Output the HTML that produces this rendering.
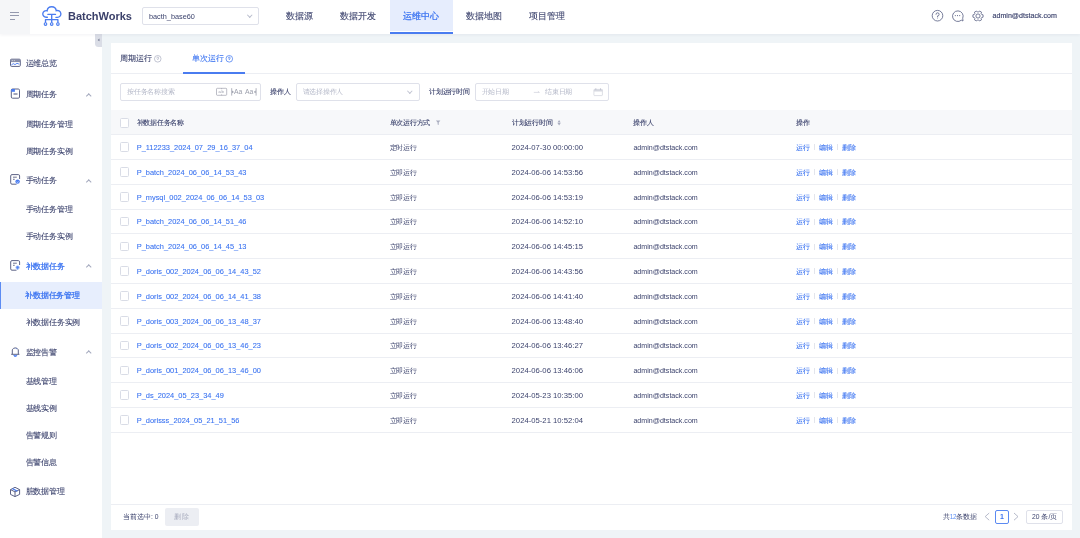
<!DOCTYPE html>
<html><head><meta charset="utf-8"><style>
*{box-sizing:border-box;margin:0;padding:0}
.s,.nav,.mi{-webkit-text-stroke:0.1px currentColor}
html,body{width:1080px;height:538px;overflow:hidden;background:#eff4f7;font-family:"Liberation Sans",sans-serif;color:#3d446e}
#root{position:absolute;left:0;top:0;width:1080px;height:538px;will-change:transform;overflow:hidden}
.a{position:absolute;white-space:nowrap}
#hdr{position:absolute;left:0;top:0;width:1080px;height:34px;background:#fff;box-shadow:0 1px 3px rgba(30,40,80,.06);z-index:3}
#ham{position:absolute;left:0;top:0;width:30px;height:34px;background:#f5f6f8}
#ham i{position:absolute;left:9.7px;height:1px;background:#9499ae;width:8.9px}
.nav{position:absolute;top:0;height:31px;line-height:32.4px;font-size:9px;color:#3d446e;text-align:center;font-weight:500}
.nav.on{background:#e6edfd;color:#3a73f1}
.nav.on:after{content:"";position:absolute;left:0;right:0;top:32px;height:2px;background:#4a7cf0}
#side{position:absolute;left:0;top:34px;width:102px;height:504px;background:#fff;z-index:2}
.mi{position:absolute;left:0;width:102px;height:27px;line-height:27px;font-size:7.75px;letter-spacing:-0.2px;color:#3d446e;z-index:2;font-weight:500}
.mi .t{position:absolute;left:25.5px;top:0}
.mi.on{background:#e7eefd;color:#3a73f1;border-left:1.2px solid #5d8cf3}
.mi.on .t{left:24.3px}
.mi.blue{color:#3a73f1}
.mi.on,.mi.blue,.nav.on{-webkit-text-stroke:0.25px currentColor}
.chev{position:absolute;left:87.3px;top:12.6px;width:3.5px;height:3.5px;border-left:1px solid #a3a8bd;border-top:1px solid #a3a8bd;transform:rotate(45deg)}
#card{position:absolute;left:111px;top:43px;width:960.8px;height:486.5px;background:#fff}
.f7{font-size:6.75px;letter-spacing:-0.25px}
.ph{color:#b4b8c8}
.bd{font-weight:400;-webkit-text-stroke:0.12px currentColor}
.box{position:absolute;border:1px solid #dfe1ea;border-radius:2px;background:#fff}
.cb{position:absolute;left:120.1px;width:8.8px;height:9.5px;border:1px solid #d9dce6;border-radius:1.5px;background:#fff}
.row{position:absolute;left:111px;width:961px;height:24.8px;border-bottom:1px solid #eceef3}
.lk{color:#3a73f1;-webkit-text-stroke:0.08px currentColor}
.sep{position:absolute;width:1px;height:6px;background:#e3e5ec}
</style></head><body><div id="root">
<div id="hdr">
<div id="ham"><i style="top:11.8px"></i><i style="top:15.1px"></i><i style="top:18.8px;width:5.5px"></i></div>
<svg class="a" style="left:41px;top:5.3px" width="22" height="22" viewBox="41 5 22 22" fill="none" stroke="#4a7cf0" stroke-width="1.35" stroke-linecap="round">
<path d="M47.4 17.20 H46.10 A3.3 3.3 0 1 1 47.13 10.77 A4.6 4.6 0 0 1 56.26 10.73 A3.4 3.4 0 1 1 57.50 17.30 H55.9"/>
<path d="M47.9 14.4 H55.5 M51.7 14.4 V19.6 M45.5 19.6 H57.9 M45.5 19.6 V22.6 M51.7 19.6 V22.6 M57.9 19.6 V22.6"/>
<circle cx="45.5" cy="24.1" r="1.3" fill="#fff" stroke-width="1.1"/><circle cx="51.7" cy="24.1" r="1.3" fill="#fff" stroke-width="1.1"/><circle cx="57.9" cy="24.1" r="1.3" fill="#fff" stroke-width="1.1"/>
</svg>
<div class="a" style="left:68px;top:8.5px;font-size:11px;font-weight:700;color:#3b406a;line-height:15px">BatchWorks</div>
<div class="box" style="left:142px;top:7px;width:117px;height:18px"></div>
<div class="a" style="left:149px;top:8px;line-height:18px;font-size:7.3px;color:#3d446e">bacth_base60</div>
<div class="a" style="left:247.5px;top:12.8px;width:3.5px;height:3.5px;border-right:1px solid #b8bccc;border-bottom:1px solid #b8bccc;transform:rotate(45deg)"></div>
<div class="nav" style="left:272.5px;width:54px">数据源</div>
<div class="nav" style="left:326.5px;width:63px">数据开发</div>
<div class="nav on" style="left:389.5px;width:63px">运维中心</div>
<div class="nav" style="left:452.5px;width:63px">数据地图</div>
<div class="nav" style="left:515.5px;width:63px">项目管理</div>
<svg class="a" style="left:928px;top:8px" width="60" height="16" viewBox="928 8 60 16" fill="none" stroke="#5f6688" stroke-width="0.85">
<circle cx="937.5" cy="15.7" r="5.3"/>
<path d="M936 14.3 A1.55 1.55 0 1 1 937.6 15.9 V17" stroke-linecap="round"/><circle cx="937.6" cy="18.3" r="0.4" fill="#5f6688" stroke="none"/>
<path d="M963 21 L961.3 20.2 A5.3 5.3 0 1 1 962.7 18.3 Z" stroke-linejoin="round"/>
<circle cx="955.3" cy="15.6" r="0.55" fill="#5f6688" stroke="none"/><circle cx="957.5" cy="15.6" r="0.55" fill="#5f6688" stroke="none"/><circle cx="959.7" cy="15.6" r="0.55" fill="#5f6688" stroke="none"/>
<path d="M981.71 14.50 L983.07 14.83 L983.07 17.17 L981.71 17.50 L981.15 18.46 L981.55 19.80 L979.52 20.97 L978.56 19.96 L977.44 19.96 L976.48 20.97 L974.45 19.80 L974.85 18.46 L974.29 17.50 L972.93 17.17 L972.93 14.83 L974.29 14.50 L974.85 13.54 L974.45 12.20 L976.48 11.03 L977.44 12.04 L978.56 12.04 L979.52 11.03 L981.55 12.20 L981.15 13.54 Z" stroke-linejoin="round"/>
<circle cx="978" cy="16" r="2.1"/>
</svg>
<div class="a" style="left:992.5px;top:9.7px;line-height:12px;font-size:7.1px;color:#3d446e;-webkit-text-stroke:0.15px #3d446e">admin@dtstack.com</div>
</div>
<div id="side"></div>
<div class="a" style="left:95px;top:34px;width:7px;height:13.3px;background:#dadde6;border-radius:0 0 0 3.5px;z-index:2"></div>
<div class="a" style="left:98.4px;top:39.2px;width:2.4px;height:2.4px;border-left:0.7px solid #8d91a6;border-bottom:0.7px solid #8d91a6;transform:rotate(45deg);z-index:2"></div>
<div class="mi g" style="top:49.50px"><span class="t">运维总览</span></div>
<div class="mi g c" style="top:81.20px"><span class="t">周期任务</span><i class="chev"></i></div>
<div class="mi " style="top:110.80px"><span class="t">周期任务管理</span></div>
<div class="mi " style="top:137.70px"><span class="t">周期任务实例</span></div>
<div class="mi g c" style="top:167.00px"><span class="t">手动任务</span><i class="chev"></i></div>
<div class="mi " style="top:196.10px"><span class="t">手动任务管理</span></div>
<div class="mi " style="top:223.40px"><span class="t">手动任务实例</span></div>
<div class="mi g c blue" style="top:252.80px"><span class="t">补数据任务</span><i class="chev"></i></div>
<div class="mi on" style="top:282.00px"><span class="t">补数据任务管理</span></div>
<div class="mi " style="top:309.10px"><span class="t">补数据任务实例</span></div>
<div class="mi g c" style="top:338.50px"><span class="t">监控告警</span><i class="chev"></i></div>
<div class="mi " style="top:367.90px"><span class="t">基线管理</span></div>
<div class="mi " style="top:395.20px"><span class="t">基线实例</span></div>
<div class="mi " style="top:421.70px"><span class="t">告警规则</span></div>
<div class="mi " style="top:448.50px"><span class="t">告警信息</span></div>
<div class="mi g" style="top:478.00px"><span class="t">脏数据管理</span></div>
<svg class="a" style="left:0;top:34px;z-index:3" width="30" height="504" viewBox="0 34 30 504" fill="none" stroke="#5d6386" stroke-width="1">
<rect x="10.5" y="59.2" width="9.8" height="7.2" rx="1"/>
<rect x="10.5" y="59.2" width="9.8" height="2.9" fill="#8a8fa8" stroke="none"/><path d="M11.8 60.6 H12.8 M13.8 60.6 H14.8" stroke="#fff" stroke-width="0.6"/>
<path d="M11.2 65.2 L13.2 63.6 L15 64.6 L17 63.3 L19.3 64.2" stroke="#4a7cf0" stroke-width="0.9"/>
<rect x="11.3" y="89" width="8.2" height="9.2" rx="1.2"/>
<rect x="11.3" y="89" width="3.6" height="2.8" fill="#4a7cf0" stroke="none"/>
<path d="M13.5 94 H17.5" stroke-width="1.4" stroke="#7a7f9c"/>
<path d="M16.5 184.2 H12 A1.3 1.3 0 0 1 10.7 182.9 V175.9 A1.3 1.3 0 0 1 12 174.6 H18.3 A1.3 1.3 0 0 1 19.6 175.9 V179"/>
<path d="M13 177.2 H16.8 M13 179.3 H14.7" stroke-width="0.9"/>
<circle cx="17.6" cy="181.6" r="2.2" fill="#4a7cf0" stroke="none"/>
<path d="M16.6 181.8 L17.6 182.4 L18.6 181.6" stroke="#fff" stroke-width="0.6"/>
<path d="M16.5 270.2 H12 A1.3 1.3 0 0 1 10.7 268.9 V261.9 A1.3 1.3 0 0 1 12 260.6 H18.3 A1.3 1.3 0 0 1 19.6 261.9 V265"/>
<path d="M13 263.2 H16.8 M13 265.3 H14.7" stroke-width="0.9"/>
<circle cx="17.6" cy="267.6" r="2.1" fill="#9fbaf7" stroke="none"/>
<path d="M17.6 266.2 V269.4 M16.2 267.3 H19" stroke="#4a7cf0" stroke-width="0.8"/>
<path d="M11.2 354.3 H19.4 M12.3 354.3 V349.8 A3.3 3.3 0 0 1 18.3 349.8 V354.3"/>
<path d="M13.8 355.2 A1.5 1.2 0 0 0 16.8 355.2" fill="#4a7cf0" stroke="#4a7cf0"/>
<path d="M15.6 348.3 L16.6 348.3 L16.1 349.4 Z" fill="#4a7cf0" stroke="none"/>
<path d="M15 487.3 L19.6 489.6 V494.4 L15 496.6 L10.5 494.4 V489.6 Z M10.5 489.6 L15 491.9 L19.6 489.6 M15 491.9 V496.6" stroke-linejoin="round"/>
<path d="M12.5 488.6 L17.4 491.2" stroke="#4a7cf0" stroke-width="1.2"/>
</svg>
<div id="card"></div>
<div class="a s" style="left:120px;top:52.7px;line-height:12px;font-size:8px;font-weight:500">周期运行</div>
<div class="a s" style="left:192px;top:52.7px;line-height:12px;font-size:8px;font-weight:500;color:#3a73f1">单次运行</div>
<svg class="a" style="left:150px;top:52px" width="90" height="14" viewBox="150 52 90 14" fill="none" stroke-width="0.7">
<circle cx="157.75" cy="58.8" r="3.3" stroke="#a9adc0"/>
<path d="M156.8 58.1 A0.95 0.95 0 1 1 157.75 59 V59.6" stroke="#a9adc0" stroke-linecap="round"/>
<circle cx="229.3" cy="58.8" r="3.3" stroke="#3a73f1"/>
<path d="M228.35 58.1 A0.95 0.95 0 1 1 229.3 59 V59.6" stroke="#3a73f1" stroke-linecap="round"/>
</svg>
<div class="a" style="left:111px;top:73px;width:961px;height:1px;background:#eceef3"></div>
<div class="a" style="left:183px;top:72.3px;width:62px;height:2px;background:#4a7cf0"></div>
<div class="box" style="left:120.4px;top:83px;width:140.6px;height:17.5px"></div>
<div class="a f7 ph" style="left:127px;top:85.5px;line-height:12px">按任务名称搜索</div>
<svg class="a" style="left:214px;top:86px" width="46" height="12" viewBox="214 86 46 12" fill="none" stroke="#8e91a0" stroke-width="0.6">
<rect x="216.5" y="88.3" width="10.2" height="7" rx="0.8"/>
<path d="M221.6 88.3 V89.2 M221.6 94.4 V95.3"/>

<path d="M231.7 88.2 V95.6" stroke-width="0.7"/>
<path d="M232.2 90.6 L233.9 91.9 L232.2 93.2 Z M255.6 90.6 L253.9 91.9 L255.6 93.2 Z" fill="#8e91a0" stroke="none"/>
<path d="M256.1 88.2 V95.6" stroke-width="0.7"/>
<text x="221.6" y="93.4" font-size="4" fill="#8e91a0" stroke="none" font-family="Liberation Sans" text-anchor="middle" letter-spacing="0.8">ab</text>
</svg>
<div class="a" style="left:234px;top:86px;line-height:12px;font-size:6.8px;color:#9a9daa">Aa</div>
<div class="a" style="left:245px;top:86px;line-height:12px;font-size:6.8px;color:#9a9daa">Aa</div>
<div class="a f7 bd" style="left:270.4px;top:85.8px;line-height:12px">操作人</div>
<div class="box" style="left:296px;top:83px;width:124px;height:17.5px"></div>
<div class="a f7 ph" style="left:302.6px;top:85.5px;line-height:12px">请选择操作人</div>
<div class="a" style="left:408.3px;top:89.2px;width:3.6px;height:3.6px;border-right:0.7px solid #c2c5d2;border-bottom:0.7px solid #c2c5d2;transform:rotate(45deg)"></div>
<div class="a f7 bd" style="left:429px;top:85.8px;line-height:12px">计划运行时间</div>
<div class="box" style="left:475px;top:83px;width:133.6px;height:17.5px"></div>
<div class="a f7 ph" style="left:481.7px;top:85.5px;line-height:12px">开始日期</div>
<div class="a f7 ph" style="left:545px;top:85.5px;line-height:12px">结束日期</div>
<svg class="a" style="left:530px;top:86px" width="76" height="12" viewBox="530 86 76 12" fill="none" stroke="#c0c3d0" stroke-width="0.55">
<path d="M533.8 92.4 H539.4 L537.9 91.3"/>
<rect x="593.9" y="89.4" width="8.5" height="6.2" rx="0.6" stroke="#c3c6d2"/>
<rect x="593.9" y="89.4" width="8.5" height="2.1" fill="#d6d8e0" stroke="none"/>
<path d="M595.8 88.2 V90 M600.5 88.2 V90" stroke="#b9bcca" stroke-width="0.7"/>
</svg>
<div class="a" style="left:111px;top:110px;width:961px;height:25px;background:#f7f8fa;border-bottom:1px solid #eceef3"></div>
<div class="cb" style="top:118.2px"></div>
<div class="a f7 bd" style="left:136.5px;top:116.5px;line-height:12px">补数据任务名称</div>
<div class="a f7 bd" style="left:389.6px;top:116.5px;line-height:12px">单次运行方式</div>
<div class="a f7 bd" style="left:511.9px;top:116.5px;line-height:12px">计划运行时间</div>
<div class="a f7 bd" style="left:633.4px;top:116.5px;line-height:12px">操作人</div>
<div class="a f7 bd" style="left:796px;top:116.5px;line-height:12px">操作</div>
<svg class="a" style="left:434px;top:118px" width="130" height="10" viewBox="434 118 130 10" stroke="none" fill="#a9adbf">
<path d="M435.9 120.4 H440.4 L438.7 122.6 V125.1 L437.6 124.5 V122.6 Z"/>
<path d="M557.5 122.4 L559.1 120.1 L560.7 122.4 Z M557.5 123.1 L559.1 125.5 L560.7 123.1 Z"/>
</svg>
<div class="row" style="top:135.20px"></div>
<div class="cb" style="top:142.40px"></div>
<div class="a lk" style="left:136.7px;top:141.90px;line-height:12px;font-size:7.43px">P_112233_2024_07_29_16_37_04</div>
<div class="a f7" style="left:389.6px;top:141.90px;line-height:12px;font-weight:500">定时运行</div>
<div class="a" style="left:511.6px;top:141.90px;line-height:12px;font-size:7.7px">2024-07-30 00:00:00</div>
<div class="a" style="left:633.4px;top:141.90px;line-height:12px;font-size:7.1px">admin@dtstack.com</div>
<div class="a f7 lk" style="left:796px;top:141.90px;line-height:12px">运行</div>
<div class="sep" style="left:814.3px;top:144.40px"></div>
<div class="a f7 lk" style="left:819px;top:141.90px;line-height:12px">编辑</div>
<div class="sep" style="left:837.3px;top:144.40px"></div>
<div class="a f7 lk" style="left:842px;top:141.90px;line-height:12px">删除</div>
<div class="row" style="top:160.00px"></div>
<div class="cb" style="top:167.20px"></div>
<div class="a lk" style="left:136.7px;top:166.70px;line-height:12px;font-size:7.43px">P_batch_2024_06_06_14_53_43</div>
<div class="a f7" style="left:389.6px;top:166.70px;line-height:12px;font-weight:500">立即运行</div>
<div class="a" style="left:511.6px;top:166.70px;line-height:12px;font-size:7.7px">2024-06-06 14:53:56</div>
<div class="a" style="left:633.4px;top:166.70px;line-height:12px;font-size:7.1px">admin@dtstack.com</div>
<div class="a f7 lk" style="left:796px;top:166.70px;line-height:12px">运行</div>
<div class="sep" style="left:814.3px;top:169.20px"></div>
<div class="a f7 lk" style="left:819px;top:166.70px;line-height:12px">编辑</div>
<div class="sep" style="left:837.3px;top:169.20px"></div>
<div class="a f7 lk" style="left:842px;top:166.70px;line-height:12px">删除</div>
<div class="row" style="top:184.80px"></div>
<div class="cb" style="top:192.00px"></div>
<div class="a lk" style="left:136.7px;top:191.50px;line-height:12px;font-size:7.43px">P_mysql_002_2024_06_06_14_53_03</div>
<div class="a f7" style="left:389.6px;top:191.50px;line-height:12px;font-weight:500">立即运行</div>
<div class="a" style="left:511.6px;top:191.50px;line-height:12px;font-size:7.7px">2024-06-06 14:53:19</div>
<div class="a" style="left:633.4px;top:191.50px;line-height:12px;font-size:7.1px">admin@dtstack.com</div>
<div class="a f7 lk" style="left:796px;top:191.50px;line-height:12px">运行</div>
<div class="sep" style="left:814.3px;top:194.00px"></div>
<div class="a f7 lk" style="left:819px;top:191.50px;line-height:12px">编辑</div>
<div class="sep" style="left:837.3px;top:194.00px"></div>
<div class="a f7 lk" style="left:842px;top:191.50px;line-height:12px">删除</div>
<div class="row" style="top:209.60px"></div>
<div class="cb" style="top:216.80px"></div>
<div class="a lk" style="left:136.7px;top:216.30px;line-height:12px;font-size:7.43px">P_batch_2024_06_06_14_51_46</div>
<div class="a f7" style="left:389.6px;top:216.30px;line-height:12px;font-weight:500">立即运行</div>
<div class="a" style="left:511.6px;top:216.30px;line-height:12px;font-size:7.7px">2024-06-06 14:52:10</div>
<div class="a" style="left:633.4px;top:216.30px;line-height:12px;font-size:7.1px">admin@dtstack.com</div>
<div class="a f7 lk" style="left:796px;top:216.30px;line-height:12px">运行</div>
<div class="sep" style="left:814.3px;top:218.80px"></div>
<div class="a f7 lk" style="left:819px;top:216.30px;line-height:12px">编辑</div>
<div class="sep" style="left:837.3px;top:218.80px"></div>
<div class="a f7 lk" style="left:842px;top:216.30px;line-height:12px">删除</div>
<div class="row" style="top:234.40px"></div>
<div class="cb" style="top:241.60px"></div>
<div class="a lk" style="left:136.7px;top:241.10px;line-height:12px;font-size:7.43px">P_batch_2024_06_06_14_45_13</div>
<div class="a f7" style="left:389.6px;top:241.10px;line-height:12px;font-weight:500">立即运行</div>
<div class="a" style="left:511.6px;top:241.10px;line-height:12px;font-size:7.7px">2024-06-06 14:45:15</div>
<div class="a" style="left:633.4px;top:241.10px;line-height:12px;font-size:7.1px">admin@dtstack.com</div>
<div class="a f7 lk" style="left:796px;top:241.10px;line-height:12px">运行</div>
<div class="sep" style="left:814.3px;top:243.60px"></div>
<div class="a f7 lk" style="left:819px;top:241.10px;line-height:12px">编辑</div>
<div class="sep" style="left:837.3px;top:243.60px"></div>
<div class="a f7 lk" style="left:842px;top:241.10px;line-height:12px">删除</div>
<div class="row" style="top:259.20px"></div>
<div class="cb" style="top:266.40px"></div>
<div class="a lk" style="left:136.7px;top:265.90px;line-height:12px;font-size:7.43px">P_doris_002_2024_06_06_14_43_52</div>
<div class="a f7" style="left:389.6px;top:265.90px;line-height:12px;font-weight:500">立即运行</div>
<div class="a" style="left:511.6px;top:265.90px;line-height:12px;font-size:7.7px">2024-06-06 14:43:56</div>
<div class="a" style="left:633.4px;top:265.90px;line-height:12px;font-size:7.1px">admin@dtstack.com</div>
<div class="a f7 lk" style="left:796px;top:265.90px;line-height:12px">运行</div>
<div class="sep" style="left:814.3px;top:268.40px"></div>
<div class="a f7 lk" style="left:819px;top:265.90px;line-height:12px">编辑</div>
<div class="sep" style="left:837.3px;top:268.40px"></div>
<div class="a f7 lk" style="left:842px;top:265.90px;line-height:12px">删除</div>
<div class="row" style="top:284.00px"></div>
<div class="cb" style="top:291.20px"></div>
<div class="a lk" style="left:136.7px;top:290.70px;line-height:12px;font-size:7.43px">P_doris_002_2024_06_06_14_41_38</div>
<div class="a f7" style="left:389.6px;top:290.70px;line-height:12px;font-weight:500">立即运行</div>
<div class="a" style="left:511.6px;top:290.70px;line-height:12px;font-size:7.7px">2024-06-06 14:41:40</div>
<div class="a" style="left:633.4px;top:290.70px;line-height:12px;font-size:7.1px">admin@dtstack.com</div>
<div class="a f7 lk" style="left:796px;top:290.70px;line-height:12px">运行</div>
<div class="sep" style="left:814.3px;top:293.20px"></div>
<div class="a f7 lk" style="left:819px;top:290.70px;line-height:12px">编辑</div>
<div class="sep" style="left:837.3px;top:293.20px"></div>
<div class="a f7 lk" style="left:842px;top:290.70px;line-height:12px">删除</div>
<div class="row" style="top:308.80px"></div>
<div class="cb" style="top:316.00px"></div>
<div class="a lk" style="left:136.7px;top:315.50px;line-height:12px;font-size:7.43px">P_doris_003_2024_06_06_13_48_37</div>
<div class="a f7" style="left:389.6px;top:315.50px;line-height:12px;font-weight:500">立即运行</div>
<div class="a" style="left:511.6px;top:315.50px;line-height:12px;font-size:7.7px">2024-06-06 13:48:40</div>
<div class="a" style="left:633.4px;top:315.50px;line-height:12px;font-size:7.1px">admin@dtstack.com</div>
<div class="a f7 lk" style="left:796px;top:315.50px;line-height:12px">运行</div>
<div class="sep" style="left:814.3px;top:318.00px"></div>
<div class="a f7 lk" style="left:819px;top:315.50px;line-height:12px">编辑</div>
<div class="sep" style="left:837.3px;top:318.00px"></div>
<div class="a f7 lk" style="left:842px;top:315.50px;line-height:12px">删除</div>
<div class="row" style="top:333.60px"></div>
<div class="cb" style="top:340.80px"></div>
<div class="a lk" style="left:136.7px;top:340.30px;line-height:12px;font-size:7.43px">P_doris_002_2024_06_06_13_46_23</div>
<div class="a f7" style="left:389.6px;top:340.30px;line-height:12px;font-weight:500">立即运行</div>
<div class="a" style="left:511.6px;top:340.30px;line-height:12px;font-size:7.7px">2024-06-06 13:46:27</div>
<div class="a" style="left:633.4px;top:340.30px;line-height:12px;font-size:7.1px">admin@dtstack.com</div>
<div class="a f7 lk" style="left:796px;top:340.30px;line-height:12px">运行</div>
<div class="sep" style="left:814.3px;top:342.80px"></div>
<div class="a f7 lk" style="left:819px;top:340.30px;line-height:12px">编辑</div>
<div class="sep" style="left:837.3px;top:342.80px"></div>
<div class="a f7 lk" style="left:842px;top:340.30px;line-height:12px">删除</div>
<div class="row" style="top:358.40px"></div>
<div class="cb" style="top:365.60px"></div>
<div class="a lk" style="left:136.7px;top:365.10px;line-height:12px;font-size:7.43px">P_doris_001_2024_06_06_13_46_00</div>
<div class="a f7" style="left:389.6px;top:365.10px;line-height:12px;font-weight:500">立即运行</div>
<div class="a" style="left:511.6px;top:365.10px;line-height:12px;font-size:7.7px">2024-06-06 13:46:06</div>
<div class="a" style="left:633.4px;top:365.10px;line-height:12px;font-size:7.1px">admin@dtstack.com</div>
<div class="a f7 lk" style="left:796px;top:365.10px;line-height:12px">运行</div>
<div class="sep" style="left:814.3px;top:367.60px"></div>
<div class="a f7 lk" style="left:819px;top:365.10px;line-height:12px">编辑</div>
<div class="sep" style="left:837.3px;top:367.60px"></div>
<div class="a f7 lk" style="left:842px;top:365.10px;line-height:12px">删除</div>
<div class="row" style="top:383.20px"></div>
<div class="cb" style="top:390.40px"></div>
<div class="a lk" style="left:136.7px;top:389.90px;line-height:12px;font-size:7.43px">P_ds_2024_05_23_34_49</div>
<div class="a f7" style="left:389.6px;top:389.90px;line-height:12px;font-weight:500">立即运行</div>
<div class="a" style="left:511.6px;top:389.90px;line-height:12px;font-size:7.7px">2024-05-23 10:35:00</div>
<div class="a" style="left:633.4px;top:389.90px;line-height:12px;font-size:7.1px">admin@dtstack.com</div>
<div class="a f7 lk" style="left:796px;top:389.90px;line-height:12px">运行</div>
<div class="sep" style="left:814.3px;top:392.40px"></div>
<div class="a f7 lk" style="left:819px;top:389.90px;line-height:12px">编辑</div>
<div class="sep" style="left:837.3px;top:392.40px"></div>
<div class="a f7 lk" style="left:842px;top:389.90px;line-height:12px">删除</div>
<div class="row" style="top:408.00px"></div>
<div class="cb" style="top:415.20px"></div>
<div class="a lk" style="left:136.7px;top:414.70px;line-height:12px;font-size:7.43px">P_dorisss_2024_05_21_51_56</div>
<div class="a f7" style="left:389.6px;top:414.70px;line-height:12px;font-weight:500">立即运行</div>
<div class="a" style="left:511.6px;top:414.70px;line-height:12px;font-size:7.7px">2024-05-21 10:52:04</div>
<div class="a" style="left:633.4px;top:414.70px;line-height:12px;font-size:7.1px">admin@dtstack.com</div>
<div class="a f7 lk" style="left:796px;top:414.70px;line-height:12px">运行</div>
<div class="sep" style="left:814.3px;top:417.20px"></div>
<div class="a f7 lk" style="left:819px;top:414.70px;line-height:12px">编辑</div>
<div class="sep" style="left:837.3px;top:417.20px"></div>
<div class="a f7 lk" style="left:842px;top:414.70px;line-height:12px">删除</div>
<div class="a" style="left:111px;top:504px;width:961px;height:1px;background:#eceef3"></div>
<div class="a f7" style="left:123px;top:511px;line-height:12px;letter-spacing:0">当前选中: 0</div>
<div class="a" style="left:165px;top:508.2px;width:34px;height:17.4px;background:#eceef3;border-radius:2px"></div>
<div class="a f7" style="left:174px;top:511px;line-height:12px;color:#a7abbd">删 除</div>
<div class="a f7" style="left:943px;top:511px;line-height:12px">共<span style="color:#5b8ef5;font-size:6.3px;letter-spacing:-0.2px">12</span>条数据</div>
<svg class="a" style="left:980px;top:508px" width="45" height="18" viewBox="980 508 45 18" fill="none" stroke="#a3a8bd" stroke-width="0.8">
<path d="M989.2 513 L985.2 516.6 L989.2 520.2"/>
<path d="M1014 513 L1018 516.6 L1014 520.2"/>
</svg>
<div class="a" style="left:995.1px;top:510.2px;width:13.6px;height:13.4px;border:1px solid #5b8af2;border-radius:2px;font-size:7px;font-weight:700;line-height:11.4px;text-align:center;color:#3a73f1">1</div>
<div class="a" style="left:1026.3px;top:510.2px;width:36.7px;height:13.4px;border:1px solid #dfe1ea;border-radius:2px;font-size:6.75px;line-height:11.4px;text-align:center;font-weight:500;padding-bottom:0.8px">20 条/页</div>
</div></body></html>
